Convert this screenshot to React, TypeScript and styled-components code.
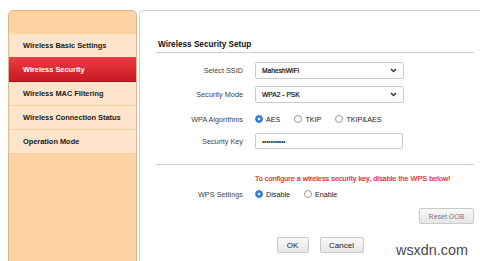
import React from 'react';
import styled, { createGlobalStyle } from 'styled-components';

const GlobalStyle = createGlobalStyle`
  html, body {
    margin: 0;
    padding: 0;
    background: #ffffff;
  }
  body {
    font-family: "Liberation Sans", Arial, Helvetica, sans-serif;
    overflow: hidden;
  }
`;

const menu = [
  'Wireless Basic Settings',
  'Wireless Security',
  'Wireless MAC Filtering',
  'Wireless Connection Status',
  'Operation Mode',
];

const Page = styled.div`
  position: relative;
  display: flex;
  align-items: flex-start;
  gap: 2px;
  width: 480px;
  height: 261px;
  padding: 10px 0 0 8px;
  box-sizing: border-box;
  overflow: hidden;
`;

const Sidebar = styled.nav`
  flex: none;
  width: 129px;
  height: 300px;
  box-sizing: border-box;
  border: 1px solid #dbb892;
  border-radius: 5px 5px 0 0;
  background: #fdd3a4;
  overflow: hidden;
`;

const SidebarHead = styled.div`
  height: 23px;
`;

const MenuItem = styled.div<{ $active?: boolean }>`
  height: 23px;
  display: flex;
  align-items: center;
  padding-left: 14px;
  font-size: 7.4px;
  font-weight: bold;
  color: ${(p) => (p.$active ? '#ffffff' : '#1a1a1a')};
  background: ${(p) =>
    p.$active ? 'linear-gradient(180deg, #ea3a44, #c81a24)' : '#fee4cb'};
  border-bottom: 1px solid ${(p) => (p.$active ? '#a8121a' : '#f6cfa6')};
  border-top: ${(p) => (p.$active ? '1px solid #d9444c' : '0')};
  margin-top: ${(p) => (p.$active ? '-1px' : '0')};
`;

const Main = styled.section`
  flex: none;
  width: 350px;
  height: 300px;
  box-sizing: border-box;
  border: 1px solid #cfcfcf;
  border-right: none;
  border-radius: 5px 0 0 0;
  padding: 29px 15px 0 16px;
`;

const Title = styled.h2`
  margin: 0;
  padding: 0 0 2px 2px;
  height: 10px;
  line-height: 10px;
  font-size: 8.2px;
  font-weight: bold;
  color: #111111;
  border-bottom: 1px solid #cfcfcf;
`;

const Form = styled.div`
  display: flex;
  flex-direction: column;
  margin-top: 5px;
`;

const Row = styled.div<{ $h: number; $top?: number }>`
  display: flex;
  align-items: center;
  height: ${(p) => p.$h}px;
  margin-top: ${(p) => p.$top ?? 0}px;
  gap: 12px;
`;

const Label = styled.div`
  width: 87px;
  text-align: right;
  font-size: 7.3px;
  color: #444444;
`;

const SelectBox = styled.div`
  width: 149px;
  height: 17px;
  box-sizing: border-box;
  border: 1px solid #cccccc;
  border-radius: 2px;
  background: #ffffff;
  display: flex;
  align-items: center;
  justify-content: space-between;
  padding: 0 6px 0 6px;
  font-size: 6.7px;
  color: #111111;
  -webkit-text-stroke: 0.2px #111111;
`;

const TextBox = styled.div`
  width: 148px;
  height: 16px;
  box-sizing: border-box;
  border: 1px solid #cccccc;
  border-radius: 2px;
  background: #ffffff;
  display: flex;
  align-items: center;
  padding-left: 6px;
  font-size: 6.6px;
  color: #333333;
  letter-spacing: -0.2px;
`;

const Options = styled.div`
  display: flex;
  align-items: center;
  gap: 14px;
`;

const Option = styled.label`
  display: flex;
  align-items: center;
  gap: 3px;
  font-size: 7.2px;
  color: #222222;
`;

const Radio = styled.span<{ $on?: boolean }>`
  width: 8px;
  height: 8px;
  box-sizing: border-box;
  border-radius: 50%;
  border: 1px solid ${(p) => (p.$on ? '#2d72d9' : '#9a9a9a')};
  background: ${(p) =>
    p.$on ? 'radial-gradient(circle, #ffffff 0 1.3px, #3b82e6 1.6px)' : '#ffffff'};
`;

const Divider = styled.div`
  margin-top: 14px;
  height: 1px;
  background: #d4cfc8;
`;

const Warning = styled.div`
  margin: 9px 0 0 99px;
  height: 10px;
  line-height: 10px;
  font-size: 7.3px;
  color: #e8252f;
  -webkit-text-stroke: 0.2px #e8252f;
`;

const ButtonRow = styled.div<{ $align: string; $top: number }>`
  display: flex;
  justify-content: ${(p) => p.$align};
  gap: 11px;
  margin-top: ${(p) => p.$top}px;
  padding-left: ${(p) => (p.$align === 'center' ? '10px' : '0')};
`;

const Button = styled.button<{ $w: number; $muted?: boolean }>`
  width: ${(p) => p.$w}px;
  height: 16px;
  box-sizing: border-box;
  padding: 0;
  border: 1px solid #c9c9c9;
  border-radius: 2px;
  background: linear-gradient(180deg, #f9f9f9, #e6e6e6);
  font-family: inherit;
  font-size: ${(p) => (p.$muted ? '7px' : '8px')};
  color: ${(p) => (p.$muted ? '#777777' : '#222222')};
`;

const Watermark = styled.div`
  position: absolute;
  right: 12px;
  bottom: 3px;
  font-size: 14.4px;
  color: #4a4a4a;
  text-shadow: 0 0 2px #ffffff;
`;

const Chevron = () => (
  <svg width="7" height="5" viewBox="0 0 7 5">
    <path d="M1 1 L3.5 3.6 L6 1" fill="none" stroke="#333" strokeWidth="1.4" />
  </svg>
);

const App = () => {
  return (
    <>
      <GlobalStyle />
      <Page>
        <Sidebar>
          <SidebarHead />
          {menu.map((item) => (
            <MenuItem key={item} $active={item === 'Wireless Security'}>
              {item}
            </MenuItem>
          ))}
        </Sidebar>
        <Main>
          <Title>Wireless Security Setup</Title>
          <Form>
            <Row $h={24}>
              <Label>Select SSID</Label>
              <SelectBox>
                MaheshWiFi
                <Chevron />
              </SelectBox>
            </Row>
            <Row $h={24}>
              <Label>Security Mode</Label>
              <SelectBox>
                WPA2 - PSK
                <Chevron />
              </SelectBox>
            </Row>
            <Row $h={26}>
              <Label>WPA Algorithms</Label>
              <Options>
                <Option>
                  <Radio $on />
                  AES
                </Option>
                <Option>
                  <Radio />
                  TKIP
                </Option>
                <Option>
                  <Radio />
                  TKIP&amp;AES
                </Option>
              </Options>
            </Row>
            <Row $h={18}>
              <Label>Security Key</Label>
              <TextBox>•••••••••••</TextBox>
            </Row>
          </Form>
          <Divider />
          <Warning>To configure a wireless security key, disable the WPS below!</Warning>
          <Row $h={16} $top={2}>
            <Label>WPS Settings</Label>
            <Options>
              <Option>
                <Radio $on />
                Disable
              </Option>
              <Option>
                <Radio />
                Enable
              </Option>
            </Options>
          </Row>
          <ButtonRow $align="flex-end" $top={6}>
            <Button $w={55} $muted>
              Reset OOB
            </Button>
          </ButtonRow>
          <ButtonRow $align="center" $top={13}>
            <Button $w={32}>OK</Button>
            <Button $w={44}>Cancel</Button>
          </ButtonRow>
        </Main>
        <Watermark>wsxdn.com</Watermark>
      </Page>
    </>
  );
};

export default App;
